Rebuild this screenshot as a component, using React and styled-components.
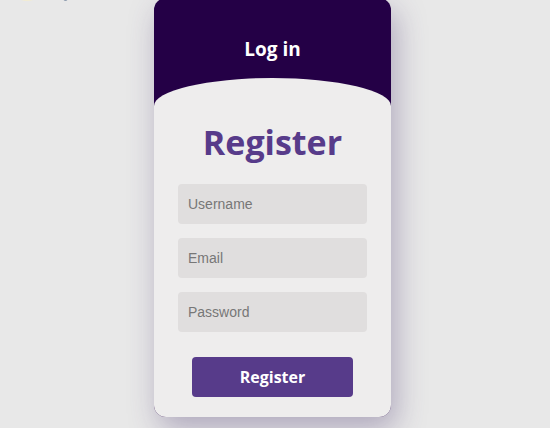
import React from "react";
import styled, { createGlobalStyle } from "styled-components";

const Global = createGlobalStyle`
  html, body { margin: 0; padding: 0; background: #e8e8e8; overflow: hidden; }
  body { width: 550px; height: 428px; font-family: "Open Sans", sans-serif; }
`;

const Page = styled.div`
  position: relative;
  width: 550px;
  height: 428px;
  padding-left: 154px;
  box-sizing: border-box;
`;

const Decor = styled.span`
  position: absolute;
  top: -5px;
  left: ${(p) => p.$left}px;
  width: ${(p) => p.$w}px;
  height: 8px;
  border-radius: 50%;
  background: ${(p) => p.$color};
`;

const Card = styled.div`
  margin-top: -2px;
  width: 237px;
  height: 419px;
  border-radius: 12px;
  background: #240046;
  overflow: hidden;
  display: flex;
  flex-direction: column;
  box-shadow: 5px 12px 30px rgba(70, 50, 110, 0.35);
`;

const Header = styled.div`
  height: 80px;
  flex: none;
  display: flex;
  align-items: flex-start;
  justify-content: center;
  padding-top: 38px;
  box-sizing: border-box;
`;

const HeaderLabel = styled.div`
  color: #fff;
  font-family: "Open Sans", sans-serif;
  font-weight: 700;
  font-size: 19px;
  line-height: 26px;
`;

const Body = styled.form`
  flex: 1;
  background: #eeeded;
  border-radius: 50% 50% 0 0 / 28px 28px 0 0;
  display: flex;
  flex-direction: column;
  align-items: center;
  padding-top: 41px;
  box-sizing: border-box;
`;

const Title = styled.h2`
  margin: 0 0 19px;
  color: #573b8a;
  font-family: "Open Sans", sans-serif;
  font-weight: 700;
  font-size: 34px;
  line-height: 46px;
`;

const Fields = styled.div`
  display: flex;
  flex-direction: column;
  gap: 14px;
`;

const Input = styled.input`
  width: 189px;
  height: 40px;
  box-sizing: border-box;
  border: none;
  outline: none;
  border-radius: 4px;
  background: #e0dede;
  padding: 0 10px;
  font-family: "Liberation Sans", Arial, sans-serif;
  font-size: 14px;
  color: #333;
  &::placeholder { color: #777; }
`;

const Button = styled.button`
  margin-top: 25px;
  width: 161px;
  height: 40px;
  border: none;
  border-radius: 4px;
  background: #573b8a;
  color: #fff;
  font-family: "Open Sans", sans-serif;
  font-weight: 700;
  font-size: 16px;
  cursor: pointer;
`;

export default function App() {
  return (
    <Page>
      <Global />
      <Decor $left={18} $w={18} $color="#f2ecd2" />
      <Decor $left={63} $w={5} $color="#8e9cae" />
      <Card>
        <Header>
          <HeaderLabel>Log in</HeaderLabel>
        </Header>
        <Body onSubmit={(e) => e.preventDefault()}>
          <Title>Register</Title>
          <Fields>
            <Input type="text" placeholder="Username" />
            <Input type="email" placeholder="Email" />
            <Input type="password" placeholder="Password" />
          </Fields>
          <Button type="submit">Register</Button>
        </Body>
      </Card>
    </Page>
  );
}
